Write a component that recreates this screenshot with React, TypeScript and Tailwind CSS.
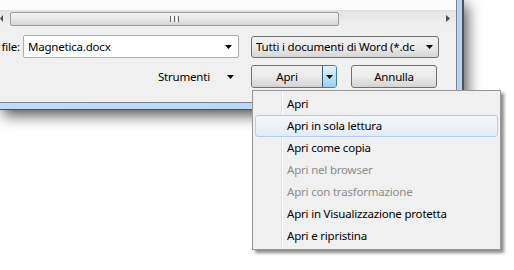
import React from 'react';

const menuItems = [
  { label: 'Apri', disabled: false, active: false },
  { label: 'Apri in sola lettura', disabled: false, active: true },
  { label: 'Apri come copia', disabled: false, active: false },
  { label: 'Apri nel browser', disabled: true, active: false },
  { label: 'Apri con trasformazione', disabled: true, active: false },
  { label: 'Apri in Visualizzazione protetta', disabled: false, active: false },
  { label: 'Apri e ripristina', disabled: false, active: false },
];

const Caret = ({ className = '' }: { className?: string }) => (
  <svg width="7" height="4" viewBox="0 0 7 4" className={className}>
    <path d="M0 0h7L3.5 4z" fill="#000" />
  </svg>
);

const App = () => {
  return (
    <div className="relative w-[514px] h-[270px] bg-white overflow-hidden font-['Noto_Sans',sans-serif] text-[11.5px] tracking-[-0.2px] text-black">
      {/* Window */}
      <div className="w-[464px] h-[110px] bg-gradient-to-r from-[#c2dbf3] to-[#b4d3f2] border-r-2 border-b border-[#4a525b] pr-[5px] pb-[6px] shadow-[3px_5px_14px_rgba(0,0,0,0.7)]">
        <div className="h-full bg-[#f0f0f0] border-r border-b border-[#7b8590] flex flex-col">
          <div className="h-[10px] bg-[#fbfbfb]" />

          {/* Horizontal scrollbar */}
          <div className="h-[16px] flex items-center bg-gradient-to-b from-[#e3e3e3] to-[#f0f0f0] border-t border-[#e0e0e0]">
            <div className="w-[10px] h-full flex items-center">
              <svg width="3" height="7" viewBox="0 0 3 7">
                <path d="M3 0v7L0 3.5z" fill="#4d4d4d" />
              </svg>
            </div>
            <div className="w-[329px] h-[14px] rounded-[2px] border border-[#9c9c9c] bg-gradient-to-b from-[#f4f4f4] via-[#e8e8e8] to-[#d4d4d4] flex items-center justify-center">
              <div className="flex gap-[1px]">
                <div className="w-[1px] h-[6px] bg-[#6a6a6a]" />
                <div className="w-[1px] h-[6px] bg-white" />
                <div className="w-[1px] h-[6px] bg-[#6a6a6a]" />
                <div className="w-[1px] h-[6px] bg-white" />
                <div className="w-[1px] h-[6px] bg-[#6a6a6a]" />
              </div>
            </div>
            <div className="flex-1" />
            <div className="w-[16px] h-full flex items-center justify-center mr-[-6px]">
              <svg width="4" height="7" viewBox="0 0 4 7">
                <path d="M0 0v7l4-3.5z" fill="#4d4d4d" />
              </svg>
            </div>
            <div className="w-[6px]" />
          </div>

          {/* File name row */}
          <div className="flex items-center mt-[9px] h-[23px]">
            <div className="w-[20px] flex justify-end overflow-hidden whitespace-nowrap">
              <span>Nome file:</span>
            </div>
            <div className="ml-[3px] w-[216px] h-[23px] bg-white border border-[#abadb3] rounded-[2px] flex items-center pl-[4px] pr-[6px]">
              <span className="flex-1">Magnetica.docx</span>
              <Caret />
            </div>
            <div className="ml-[12px] w-[188px] h-[22px] rounded-[3px] border border-[#707070] bg-gradient-to-b from-[#f2f2f2] via-[#ebebeb] to-[#d6d6d6] flex items-center pl-[4px] pr-[5px] overflow-hidden whitespace-nowrap">
              <span className="flex-1 overflow-hidden">Tutti i documenti di Word (*.dc</span>
              <Caret className="ml-[4px] shrink-0" />
            </div>
          </div>

          {/* Buttons row */}
          <div className="flex items-center justify-end mt-[7px] h-[23px] pr-[19px]">
            <span>Strumenti</span>
            <Caret className="ml-[17px]" />
            <div className="ml-[17px] w-[86px] h-[23px] rounded-[3px] border border-[#3c7fb1] flex overflow-hidden shadow-[inset_0_0_0_1px_#a6e0f8]">
              <div className="flex-1 flex items-center justify-center bg-gradient-to-b from-[#f2f2f2] via-[#ebebeb] to-[#d4d4d4]">
                Apri
              </div>
              <div className="w-[14px] border-l border-[#3c5a78] flex items-center justify-center bg-gradient-to-b from-[#e2f2fc] via-[#bde3f8] to-[#9ccfef]">
                <Caret />
              </div>
            </div>
            <div className="ml-[14px] w-[86px] h-[23px] rounded-[3px] border border-[#707070] flex items-center justify-center bg-gradient-to-b from-[#f2f2f2] via-[#ebebeb] to-[#d4d4d4]">
              Annulla
            </div>
          </div>
        </div>
      </div>

      {/* Dropdown menu */}
      <div className="absolute left-[252px] top-[90px] w-[249px] h-[160px] bg-[#f0f0f0] border border-[#979797] shadow-[3px_3px_3px_rgba(0,0,0,0.45)] pt-[2px] px-[2px]">
        <div className="absolute left-[28px] top-0 bottom-0 w-[1px] bg-[#e2e3e3]" />
        <div className="absolute left-[29px] top-0 bottom-0 w-[1px] bg-white" />
        <div className="relative flex flex-col">
          {menuItems.map((item) => (
            <div
              key={item.label}
              className={`h-[22px] flex items-center pl-[31px] rounded-[3px] border ${
                item.active
                  ? 'border-[#aecff7] bg-gradient-to-b from-[#f3f7fc] to-[#e4ecf7]'
                  : 'border-transparent'
              } ${item.disabled ? 'text-[#8d8d8d]' : 'text-black'}`}
            >
              {item.label}
            </div>
          ))}
        </div>
      </div>
    </div>
  );
};

export default App;
